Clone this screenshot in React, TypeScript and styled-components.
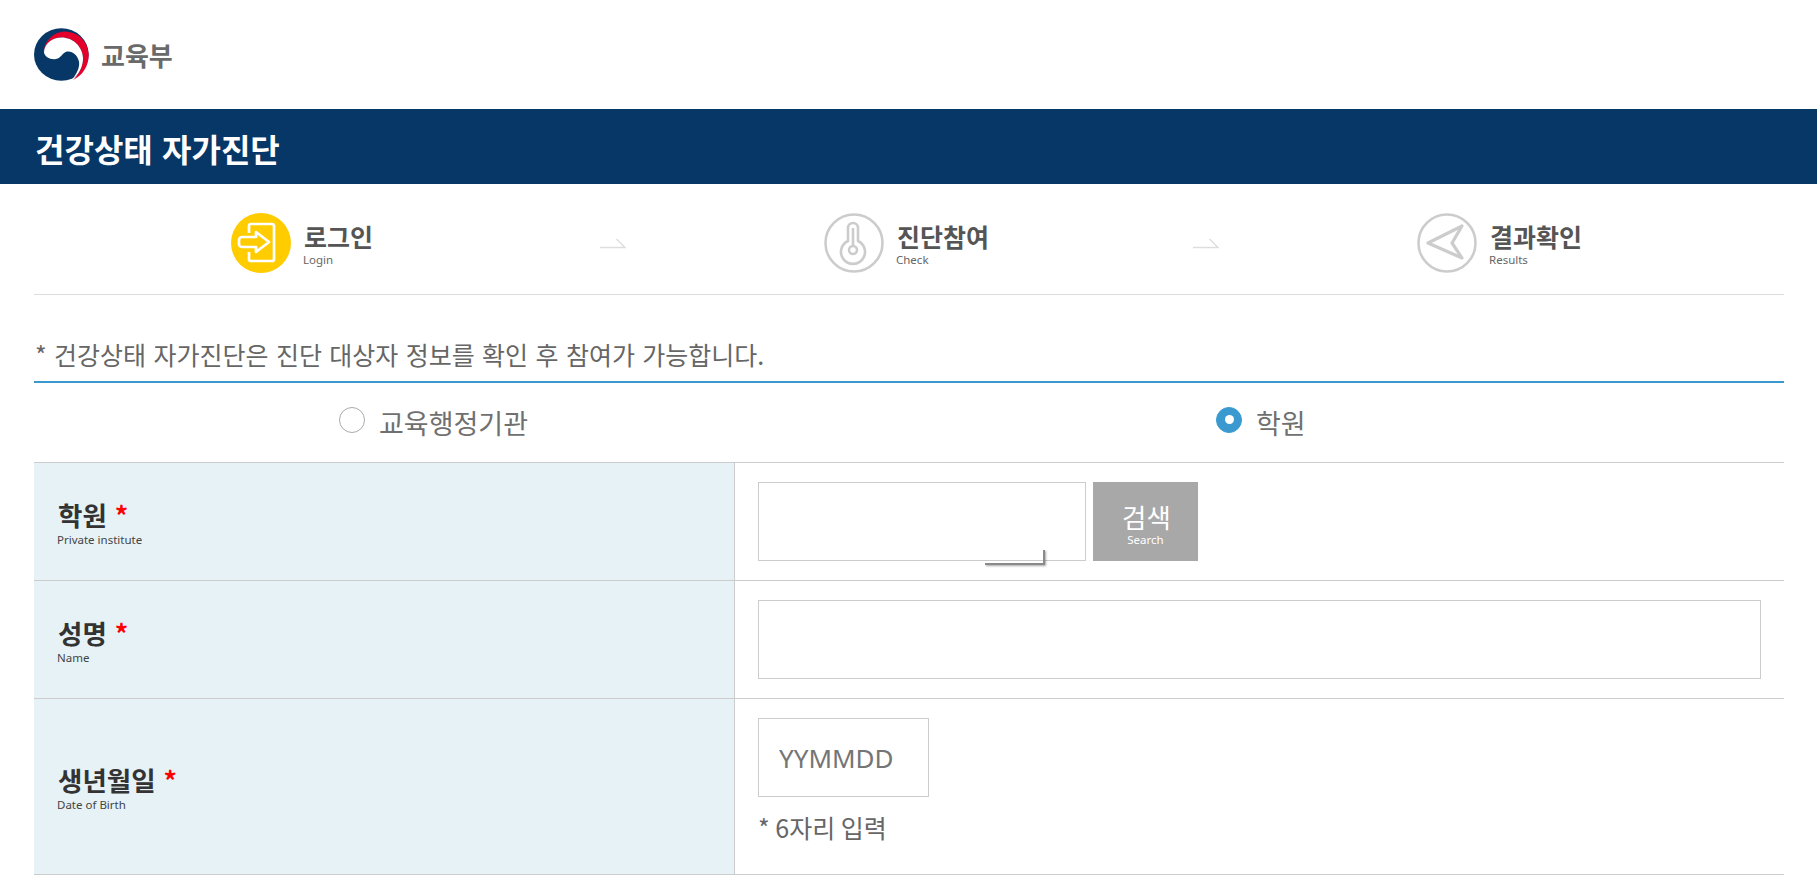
import React from 'react';
import styled, { createGlobalStyle } from 'styled-components';

const GlobalStyle = createGlobalStyle`
  html, body {
    margin: 0;
    padding: 0;
    background: #fff;
    font-family: "Noto Sans CJK KR", "Noto Sans", sans-serif;
    overflow: hidden;
  }
  * {
    box-sizing: border-box;
  }
`

const Logo = styled.div`
  height: 109px;
  display: flex;
  align-items: center;
  padding-left: 34px;
  gap: 12px;

  svg {
    width: 55px;
    height: 53px;
  }
`

const LogoText = styled.span`
  font-size: 26px;
  font-weight: 700;
  color: #6a6a6a;
`

const TitleBar = styled.h1`
  margin: 0;
  height: 75px;
  padding-left: 35px;
  background: #063766;
  color: #fff;
  font-size: 32px;
  font-weight: 700;
  word-spacing: 2px;
  line-height: 78px;
`

const Content = styled.div`
  margin: 0 33px 0 34px;
`

const Steps = styled.div`
  display: grid;
  grid-template-columns: 593px 593px 1fr;
  height: 111px;
  padding: 11px 0 0 197px;
  border-bottom: 1px solid #ddd;
`

const Step = styled.div`
  display: flex;
  align-items: center;
  height: 95px;
`

const StepIcon = styled.svg`
  width: 60px;
  height: 60px;
  flex: none;
`

const StepText = styled.div`
  margin-left: 13px;
  padding-top: 3px;
  width: 296px;
`

const StepTitle = styled.div`
  font-size: 25px;
  line-height: 32px;
  font-weight: 700;
  color: #555;
`

const StepSub = styled.div`
  margin-left: -1px;
  font-family: "Noto Sans", sans-serif;
  font-size: 11.5px;
  line-height: 16px;
  color: #666;
`

const StepArrow = styled.svg`
  width: 26px;
  height: 12px;
  flex: none;
`

const Notice = styled.p`
  margin: 0;
  height: 88px;
  padding-top: 35px;
  padding-left: 1px;
  border-bottom: 2px solid #3a9ad0;
  font-size: 25px;
  word-spacing: 1.8px;
  line-height: 48px;
  color: #666;
`

const RadioRow = styled.div`
  display: grid;
  grid-template-columns: 1fr 1fr;
  height: 79px;
`

const RadioOption = styled.label<{ indent: string }>`
  display: flex;
  align-items: center;
  gap: 14px;
  padding-left: ${({ indent }) => indent};
  font-size: 27px;
  color: #707070;
`

const RadioMark = styled.span<{ checked?: boolean }>`
  display: flex;
  align-items: center;
  justify-content: center;
  width: 26px;
  height: 26px;
  margin-bottom: 6px;
  border-radius: 50%;
  background: ${({ checked }) => (checked ? '#3a9ad0' : '#fff')};
  border: 1px solid ${({ checked }) => (checked ? '#3a9ad0' : '#aaa')};

  &::after {
    content: '';
    display: ${({ checked }) => (checked ? 'block' : 'none')};
    width: 9px;
    height: 9px;
    border-radius: 50%;
    background: #fff;
  }
`

const Form = styled.div`
  border-top: 1px solid #ccc;
`

const FormRow = styled.div<{ tall?: boolean }>`
  display: grid;
  grid-template-columns: 701px 1fr;
  height: ${({ tall }) => (tall ? '176px' : '118px')};
  border-bottom: 1px solid #ccc;
`

const LabelCell = styled.div`
  display: flex;
  flex-direction: column;
  justify-content: center;
  padding: 2px 0 0 23px;
  background: #e6f2f6;
  border-right: 1px solid #ccc;
`

const LabelTitle = styled.div`
  margin-left: 1px;
  font-size: 26.5px;
  line-height: 34px;
  font-weight: 700;
  color: #333;
`

const Required = styled.span`
  margin-left: 2px;
  color: #f00;
  font-weight: 700;
`

const LabelSub = styled.div`
  font-family: "Noto Sans", sans-serif;
  font-size: 11.5px;
  line-height: 16px;
  color: #444;
`

const FieldCell = styled.div`
  padding: 19px 23px 0 23px;
`

const FieldRow = styled.div`
  display: flex;
  gap: 7px;
`

const InputBox = styled.div`
  position: relative;
`

const TextInput = styled.input<{ width?: string }>`
  display: block;
  width: ${({ width }) => width || '100%'};
  height: 79px;
  padding: 0 20px;
  border: 1px solid #ccc;
  border-radius: 0;
  outline: none;
  background: #fff;
  font-family: "Noto Sans", sans-serif;
  font-size: 26px;
  color: #555;

  &::placeholder {
    color: #757575;
    opacity: 1;
  }
`

const GhostMenu = styled.div`
  position: absolute;
  left: 227px;
  top: 68px;
  width: 60px;
  height: 15px;
  border-right: 2px solid #8a8a8a;
  border-bottom: 2px solid #8a8a8a;
  box-shadow: 1px 1px 2px rgba(0, 0, 0, 0.35);
  clip-path: inset(0 -4px -4px 0);
`

const SearchButton = styled.button`
  width: 105px;
  height: 79px;
  padding: 5px 0 0 2px;
  border: 0;
  background: #a8a8a8;
  color: #fff;
  font-family: "Noto Sans CJK KR", sans-serif;
  font-size: 26.5px;
  line-height: 32px;
`

const SearchSub = styled.span`
  display: block;
  margin-left: -2px;
  font-family: "Noto Sans", sans-serif;
  font-size: 11.5px;
  line-height: 14px;
`

const Hint = styled.p`
  margin: 12px 0 0;
  font-size: 25px;
  line-height: 36px;
  color: #666;
`

const ArrowIcon = () => (
  <StepArrow viewBox="0 0 26 12" fill="none" stroke="#ddd" strokeWidth="1.4">
    <path d="M0 10.5H25L16.5 2" />
  </StepArrow>
)

export default function App() {
  return (
    <>
      <GlobalStyle />
      <Logo>
        <svg viewBox="42 40 166 158">
          <ellipse cx="124.5" cy="119" rx="82.5" ry="79" fill="#063766" />
          <path d="M70 118C72 75 105 48 140 50C180 52 207 85 207 120C207 155 188 183 160 196C178 178 190 155 190 130C188 95 160 68 125 68C95 68 72 90 70 118Z" fill="#e4002b" />
          <path d="M72 112C74 85 98 68 125 68C160 68 188 95 190 130C190 155 178 178 158 195C172 175 180 158 178 142C175 122 158 108 142 110C128 112 124 132 105 133C88 134 74 125 72 112Z" fill="#fff" />
        </svg>
        <LogoText>교육부</LogoText>
      </Logo>
      <TitleBar>건강상태 자가진단</TitleBar>
      <Content>
        <Steps>
          <Step>
            <StepIcon viewBox="0 0 60 60" fill="none">
              <circle cx="30" cy="30" r="30" fill="#fc0" />
              <g stroke="#fff" strokeWidth="2.7" strokeLinejoin="round">
                <path d="M18 20V13a2 2 0 0 1 2-2H41a2 2 0 0 1 2 2V46a2 2 0 0 1-2 2H20a2 2 0 0 1-2-2V39" />
                <path d="M25 19L38 29L25 39V34H11a3 3 0 0 1-3-3V27a3 3 0 0 1 3-3H25Z" />
              </g>
            </StepIcon>
            <StepText>
              <StepTitle>로그인</StepTitle>
              <StepSub>Login</StepSub>
            </StepText>
            <ArrowIcon />
          </Step>
          <Step>
            <StepIcon viewBox="0 0 60 60" fill="none" stroke="#ccc" strokeWidth="2.6">
              <circle cx="30" cy="30" r="28.5" />
              <path d="M24 28V15a5 5 0 0 1 10 0V28a12 12 0 1 1-10 0Z" />
              <circle cx="29" cy="37" r="4" />
              <path d="M29 15V33" />
            </StepIcon>
            <StepText>
              <StepTitle>진단참여</StepTitle>
              <StepSub>Check</StepSub>
            </StepText>
            <ArrowIcon />
          </Step>
          <Step>
            <StepIcon viewBox="0 0 60 60" fill="none" stroke="#ccc" strokeWidth="2.6" strokeLinejoin="round">
              <circle cx="30" cy="30" r="28.5" />
              <path d="M11 30L45 13L35 30L45 45Z" strokeWidth="3.2" />
            </StepIcon>
            <StepText>
              <StepTitle>결과확인</StepTitle>
              <StepSub>Results</StepSub>
            </StepText>
          </Step>
        </Steps>
        <Notice>* 건강상태 자가진단은 진단 대상자 정보를 확인 후 참여가 가능합니다.</Notice>
        <RadioRow>
          <RadioOption indent="305px">
            <RadioMark />
            교육행정기관
          </RadioOption>
          <RadioOption indent="307px">
            <RadioMark checked />
            학원
          </RadioOption>
        </RadioRow>
        <Form>
          <FormRow>
            <LabelCell>
              <LabelTitle>학원 <Required>*</Required></LabelTitle>
              <LabelSub>Private institute</LabelSub>
            </LabelCell>
            <FieldCell>
              <FieldRow>
                <InputBox>
                  <TextInput width="328px" />
                  <GhostMenu />
                </InputBox>
                <SearchButton>
                  검색
                  <SearchSub>Search</SearchSub>
                </SearchButton>
              </FieldRow>
            </FieldCell>
          </FormRow>
          <FormRow>
            <LabelCell>
              <LabelTitle>성명 <Required>*</Required></LabelTitle>
              <LabelSub>Name</LabelSub>
            </LabelCell>
            <FieldCell>
              <TextInput />
            </FieldCell>
          </FormRow>
          <FormRow tall>
            <LabelCell>
              <LabelTitle>생년월일 <Required>*</Required></LabelTitle>
              <LabelSub>Date of Birth</LabelSub>
            </LabelCell>
            <FieldCell>
              <TextInput width="171px" placeholder="YYMMDD" />
              <Hint>* 6자리 입력</Hint>
            </FieldCell>
          </FormRow>
        </Form>
      </Content>
    </>
  );
}
